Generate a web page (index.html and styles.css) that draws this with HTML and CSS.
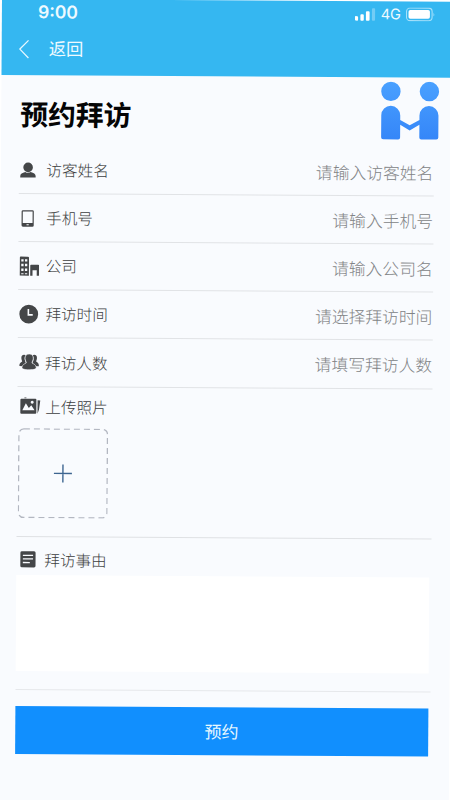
FILE: index.html
```html
<!DOCTYPE html>
<html lang="zh-CN">
<head>
<meta charset="utf-8">
<title>预约拜访</title>
<link rel="stylesheet" href="styles.css">
</head>
<body>
<div class="screen">
  <header class="header">
    <div class="status">
      <span class="time">9:00</span>
      <span class="signals">
        <svg class="bars" width="21" height="14" viewBox="0 0 21 14" fill="#fff"><rect x="0" y="9" width="3.2" height="4.5" rx="1"/><rect x="5.5" y="7" width="3.4" height="6.5" rx="1"/><rect x="11" y="4" width="3.7" height="9.5" rx="1"/><rect x="17" y="1" width="3.2" height="12.5" rx="1" opacity=".3"/></svg>
        <span class="net">4G</span>
        <svg class="battery" width="30" height="14" viewBox="0 0 30 14"><rect x=".6" y=".6" width="25.6" height="12.6" rx="3.5" fill="none" stroke="#a5e0fa" stroke-width="1.1"/><rect x="2.6" y="2.5" width="21.4" height="8.8" rx="1.8" fill="#fff"/><path d="M27.6 4.8q1.6 2.1 0 4.2z" fill="#a5e0fa"/></svg>
      </span>
    </div>
    <nav class="nav">
      <svg width="11" height="20" viewBox="0 0 11 20" fill="none" stroke="#e4f7ff" stroke-width="1.3"><path d="M9.8 1.2 1.2 10l8.6 8.8"/></svg>
      <span class="back">返回</span>
    </nav>
  </header>

  <main class="form">
    <div class="heading">
      <h1>预约拜访</h1>
      <svg class="people" width="60" height="60" viewBox="0 0 60 60"><defs><linearGradient id="blue" gradientUnits="userSpaceOnUse" x1="0" y1="0" x2="0" y2="60"><stop offset="0" stop-color="#4aa1ff"/><stop offset="1" stop-color="#3485f8"/></linearGradient></defs><g fill="url(#blue)"><circle cx="10.5" cy="10" r="9.7"/><circle cx="49" cy="10" r="9.7"/><path d="M1 34a9.500 9.500 0 0 1 19 0v4.500l9.500 5.300 9.700-5.300V34a9.500 9.500 0 0 1 19 0v22a2 2 0 0 1-2 2h-15a2 2 0 0 1-2-2V43.200l-9.700 5.900-9.500-5.700V56a2 2 0 0 1-2 2H3a2 2 0 0 1-2-2z"/></g></svg>
    </div>

    <div class="row">
      <svg class="icon" viewBox="0 0 20 20"><circle cx="8.200" cy="7.200" r="4.800"/><path d="M.4 17.400v-1.600c0-2 2-3.200 5-4 1.600 1.100 3.800 1.100 5.400 0 3 .8 5 2 5 4v1.600z"/></svg>
      <span class="label">访客姓名</span><span class="hint">请输入访客姓名</span>
    </div>
    <div class="row">
      <svg class="icon" viewBox="0 0 20 20"><path fill-rule="evenodd" d="M3.400 2h9.400a1.400 1.400 0 0 1 1.400 1.400v13.800a1.400 1.400 0 0 1-1.400 1.400H3.400A1.400 1.400 0 0 1 2 17.200V3.400A1.400 1.400 0 0 1 3.400 2zM3.200 3.400v11.500H13V3.400zM7 16v1.200h2.200V16z"/></svg>
      <span class="label">手机号</span><span class="hint">请输入手机号</span>
    </div>
    <div class="row">
      <svg class="icon" viewBox="0 0 20 20"><path fill-rule="evenodd" d="M1.500 .5h7.200a1 1 0 0 1 1 1v18H.5v-18a1 1 0 0 1 1-1zM2 3v2.400h2.300V3zm3.700 0v2.400H8V3zM2 7.700v2.400h2.300V7.700zm3.700 0v2.400H8V7.700zM2 12.400v2.400h2.300v-2.400zm3.700 0v2.400H8v-2.400zM2 17v1h2.300v-1zm3.700 0v1H8v-1zM11.800 8.500h7.200a.8.8 0 0 1 .8.800v10.200h-2.300V14h-4.200v5.500H11V9.300a.8.8 0 0 1 .8-.8z"/></svg>
      <span class="label">公司</span><span class="hint">请输入公司名</span>
    </div>
    <div class="row">
      <svg class="icon" viewBox="0 0 20 20"><circle cx="9.800" cy="10" r="9.400"/><path d="M9.400 4.800v5.900h4.400" fill="none" stroke="#f8fafd" stroke-width="1.600"/></svg>
      <span class="label">拜访时间</span><span class="hint">请选择拜访时间</span>
    </div>
    <div class="row row-last">
      <svg class="icon wide" viewBox="0 0 22 20"><path d="M5.500 2.600c-2 0-3 1.500-2.800 3.400.1 1.600.8 2.400.8 3.400C2 10.400.8 11.200.8 13v1h3.400c.8-1.500 2-2.200 3.300-2.900C6 9 5.300 5.500 7 3.200 6.600 2.800 6.100 2.600 5.500 2.600zM15.500 2.600c2 0 3 1.500 2.800 3.400-.1 1.600-.8 2.400-.8 3.400 1.500 1 2.700 1.800 2.700 3.600v1h-3.400c-.8-1.500-2-2.200-3.300-2.900 1.500-2.100 2.200-5.600.5-7.900.4-.4.9-.6 1.500-.6z"/><path d="M10.500 1.800c-2.900 0-4.300 1.900-4.100 4.500.2 2 1.100 3 1.300 4.400-1.900 1.100-4.300 2-4.300 4.700 0 1.200 1.800 2.200 7.100 2.200s7.100-1 7.100-2.200c0-2.700-2.400-3.600-4.300-4.700.2-1.400 1.100-2.400 1.300-4.400.2-2.600-1.200-4.500-4.100-4.500z" stroke="#f8fafd" stroke-width=".6"/></svg>
      <span class="label">拜访人数</span><span class="hint">请填写拜访人数</span>
    </div>

    <section class="photos">
      <div class="caption">
        <svg class="icon wide" viewBox="0 0 22 20"><path fill-rule="evenodd" d="M2 2.500h14a1 1 0 0 1 1 1v13a1 1 0 0 1-1 1H2a1 1 0 0 1-1-1v-13a1 1 0 0 1 1-1zM3 14h12.200l-3.300-5-2.400 2.700-3-4.500zM12.800 4.600a1.500 1.500 0 1 0 .01 0z"/><path d="m18.200 4 2.700.3-1.200 9-1.500 4.100zM5 1.300h2v.8H5z"/></svg>
        <span class="label">上传照片</span>
      </div>
      <div class="upload">
        <svg width="90" height="90" viewBox="0 0 90 90" fill="none"><rect x=".7" y=".7" width="88.600" height="88.600" rx="5" stroke="#b3b7c1" stroke-width="1.300" stroke-dasharray="6 4"/><path d="M45 36v18M36 45h18" stroke="#3d6590" stroke-width="1.400"/></svg>
      </div>
    </section>

    <section class="reason">
      <div class="caption">
        <svg class="icon" viewBox="0 0 20 20"><path fill-rule="evenodd" d="M3.500 2h12.200a1.500 1.500 0 0 1 1.500 1.500v13.200a1.500 1.500 0 0 1-1.500 1.500H3.500A1.500 1.500 0 0 1 2 16.700V3.500A1.500 1.500 0 0 1 3.500 2zM4.500 5.500v1.300h10.200V5.500zm0 3.600v1.300h10.200V9.100zm0 3.600V14h7v-1.300z"/></svg>
        <span class="label">拜访事由</span>
      </div>
      <div class="textbox"></div>
    </section>

    <div class="submit">预约</div>
  </main>
</div>
</body>
</html>
```
FILE: styles.css
```css
* { box-sizing: border-box; }

html, body {
  margin: 0;
  height: 800px;
  overflow: hidden;
  background: #fff;
  font-family: "Noto Sans CJK SC", sans-serif;
}

.screen {
  width: 452px;
  height: 804px;
  margin: -1px 0 0 2px;
  background: #f9fbfe;
  transform: matrix(1, 0.006, -0.0065, 1, 0, 0);
  transform-origin: 0 0;
}

.header {
  height: 76px;
  background: #35b7f1;
  color: #eefaff;
}

.status {
  display: flex;
  justify-content: space-between;
  height: 26px;
  padding: 0 18px 0 36px;
}

.time {
  font: 600 17.6px/25px Inter, sans-serif;
}

.signals {
  display: flex;
  align-items: center;
  height: 26px;
}

.net {
  margin: 0 5px;
  font: 400 14.5px/26px Inter, sans-serif;
}

.nav {
  display: flex;
  align-items: center;
  height: 47px;
  padding-left: 17px;
}

.back {
  margin: -1px 0 0 19px;
  font-size: 17.3px;
  line-height: 24px;
}

.form { padding: 0 19.5px 0 18px; }

.heading {
  display: flex;
  justify-content: space-between;
  height: 71px;
}

h1 {
  margin: 0 0 0 1px;
  color: #050505;
  font-size: 27.8px;
  font-weight: 700;
  line-height: 76px;
}

.people { margin: 4px -6.5px 0 0; }

.row {
  display: flex;
  align-items: center;
  height: 48px;
  border-bottom: 1px solid #e1e3e6;
}

.row-last { height: 49px; }

.icon {
  flex: none;
  width: 20px;
  height: 20px;
  margin-left: .5px;
  fill: #444648;
}

.wide {
  width: 22px;
  margin-right: -2px;
}

.caption .icon { margin-left: 1.5px; }

.label {
  margin: -1px 0 0 7px;
  color: #3c3e40;
  font-size: 15.6px;
  font-weight: 300;
  line-height: 24px;
}

.caption .label { margin-left: 6.5px; }

.hint {
  margin: 0 0 0 auto;
  color: #828486;
  font-size: 16.8px;
  font-weight: 300;
  line-height: 24px;
}

.caption {
  display: flex;
  align-items: center;
  height: 24px;
}

.photos {
  height: 150px;
  padding-top: 7px;
  border-bottom: 1px solid #dfe1e4;
}

.upload {
  width: 90px;
  height: 90px;
  margin: 9.5px 0 0 1px;
}

.reason {
  height: 153px;
  padding-top: 10px;
  border-bottom: 1px solid #e6e8eb;
}

.textbox {
  height: 96px;
  margin: 4px 1.5px 0 0;
  background: #fff;
}

.submit {
  height: 48px;
  margin: 16px 1.5px 0 -.5px;
  background: #118ffe;
  color: #e8f8ff;
  font-size: 17px;
  line-height: 48px;
  text-align: center;
}
```
